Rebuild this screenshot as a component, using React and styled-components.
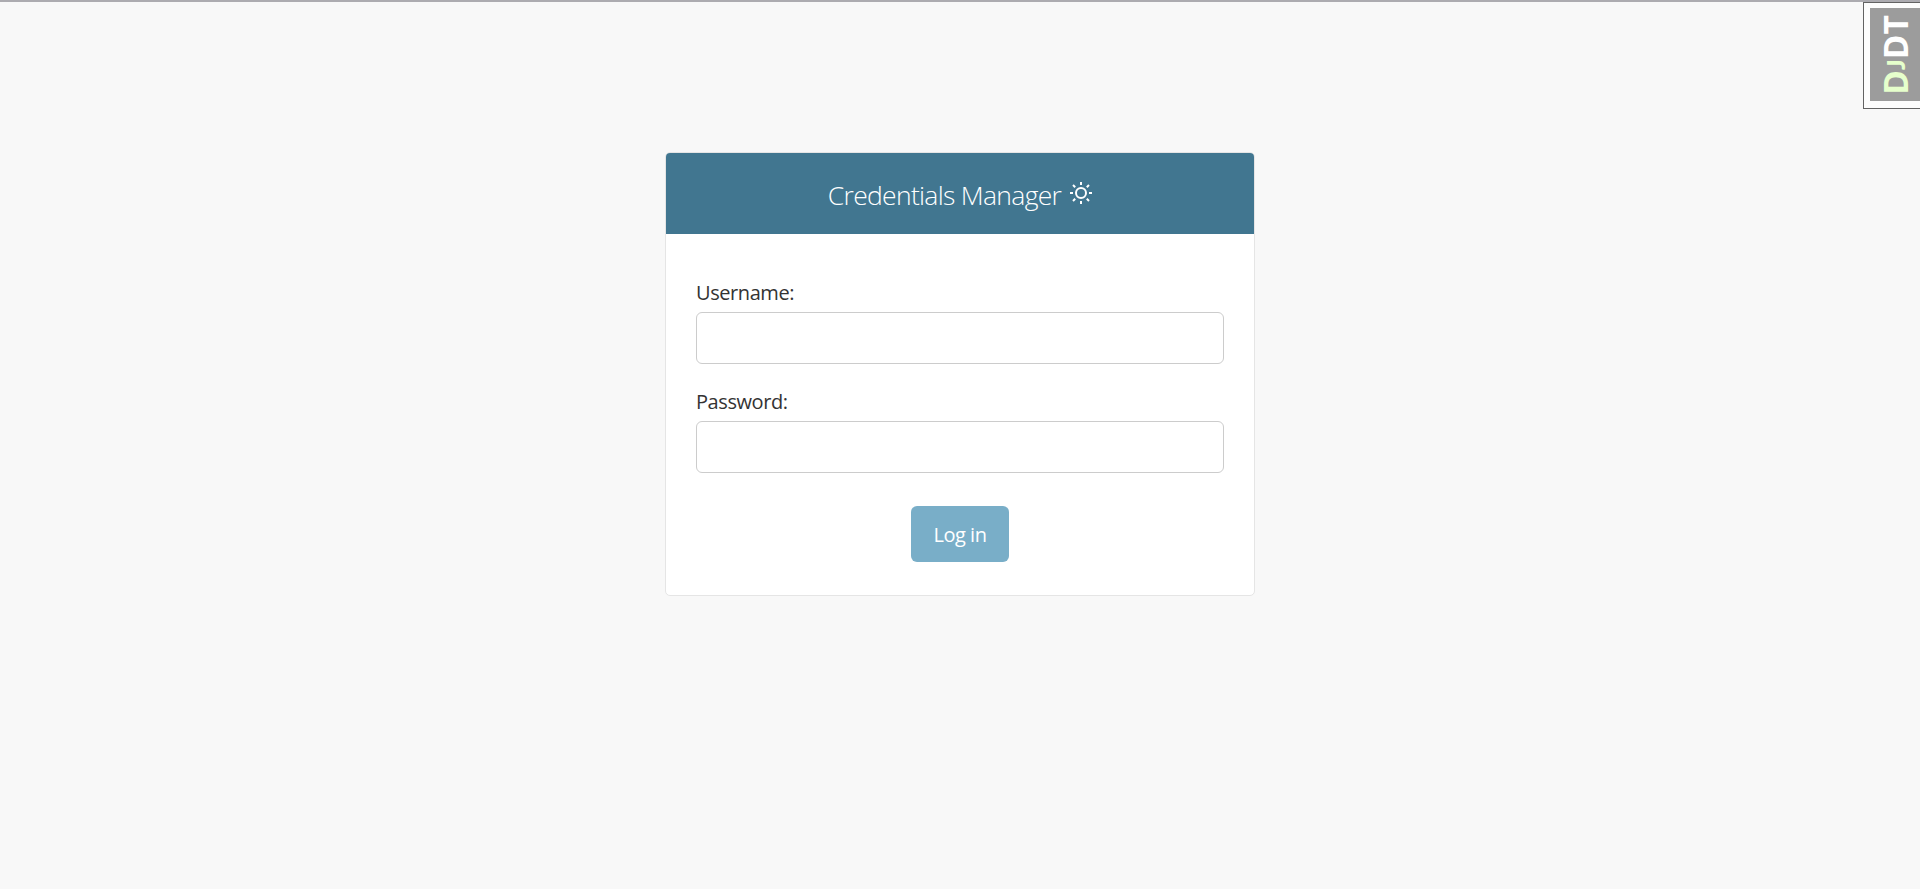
import React from "react";
import styled, { createGlobalStyle } from "styled-components";

const GlobalStyle = createGlobalStyle`
  *, *::before, *::after { box-sizing: border-box; }
  body {
    margin: 0;
    background: #f8f8f8;
    color: #333;
    font-family: "Open Sans", "Noto Sans", sans-serif;
    font-size: 20px;
    line-height: 30px;
    overflow: hidden;
  }
`;

const Page = styled.main`
  display: flex;
  justify-content: center;
  align-items: flex-start;
  min-height: 889px;
  border-top: 2px solid #acabb0;
  padding-top: 150px;
`;

const Card = styled.section`
  width: 590px;
  height: 444px;
  border: 1px solid #e5e5e5;
  border-radius: 5px;
  background: #fff;
  overflow: hidden;
`;

const CardHeader = styled.header`
  display: flex;
  justify-content: center;
  align-items: center;
  gap: 9px;
  height: 81px;
  background: #417690;
  color: #fff;
`;

const Title = styled.h1`
  margin: 2px 0 0;
  font-size: 26.5px;
  font-weight: 300;
  line-height: 36px;
  letter-spacing: -0.7px;
  white-space: nowrap;
`;

const Form = styled.form`
  display: flex;
  flex-direction: column;
  padding: 44px 30px 0;
`;

const Field = styled.div`
  display: flex;
  flex-direction: column;
  height: 86px;
  margin-bottom: 23px;
`;

const Label = styled.label`
  height: 34px;
  letter-spacing: -0.42px;
`;

const Input = styled.input`
  width: 528px;
  height: 52px;
  padding: 8px 12px;
  border: 1px solid #ccc;
  border-radius: 6px;
  background: #fff;
  font: inherit;
  outline: none;
`;

const SubmitButton = styled.button`
  align-self: center;
  width: 98px;
  height: 56px;
  margin-top: 10px;
  padding: 2px 0 0;
  border: 0;
  border-radius: 6px;
  background: #79aec8;
  color: #fff;
  font: inherit;
  font-size: 20px;
  letter-spacing: -0.5px;
`;

const DebugHandle = styled.aside`
  position: absolute;
  top: 2px;
  right: 0;
  width: 57px;
  height: 107px;
  padding: 5px 0 7px 6px;
  border: 1px solid #636363;
  border-right: 0;
  background: #fdfdfd;
`;

const HandleFace = styled.div`
  display: flex;
  align-items: center;
  justify-content: center;
  height: 93px;
  background: #9c9c9c;
`;

const HandleText = styled.span`
  writing-mode: vertical-rl;
  transform: rotate(180deg);
  color: #fff;
  font-size: 33.5px;
  font-weight: 700;
  line-height: 44px;
  white-space: nowrap;
`;

const Accent = styled.span`
  color: #e6ffcc;
`;

const SmallCap = styled.span`
  font-family: Lato, sans-serif;
  font-size: 25px;
  font-weight: 900;
`;

const SunIcon = () => (
  <svg width="22" height="22" viewBox="0 0 22 22" fill="none" stroke="#fff" strokeWidth="2">
    <circle cx="11" cy="11" r="5" />
    <path d="M11 0v3M11 19v3M0 11h3M19 11h3M3 3l2.2 2.2M16.8 16.8L19 19M3 19l2.2-2.2M16.8 5.2L19 3" />
  </svg>
);

const IconSlot = styled.span`
  display: flex;
  margin-top: -2px;
`;

export default function App() {
  return (
    <>
      <GlobalStyle />
      <Page>
        <Card>
          <CardHeader>
            <Title>Credentials Manager</Title>
            <IconSlot><SunIcon /></IconSlot>
          </CardHeader>
          <Form>
            <Field>
              <Label htmlFor="username">Username:</Label>
              <Input id="username" type="text" />
            </Field>
            <Field>
              <Label htmlFor="password">Password:</Label>
              <Input id="password" type="password" />
            </Field>
            <SubmitButton type="button">Log in</SubmitButton>
          </Form>
        </Card>
      </Page>
      <DebugHandle>
        <HandleFace>
          <HandleText><Accent>D<SmallCap>J</SmallCap></Accent>DT</HandleText>
        </HandleFace>
      </DebugHandle>
    </>
  );
}
